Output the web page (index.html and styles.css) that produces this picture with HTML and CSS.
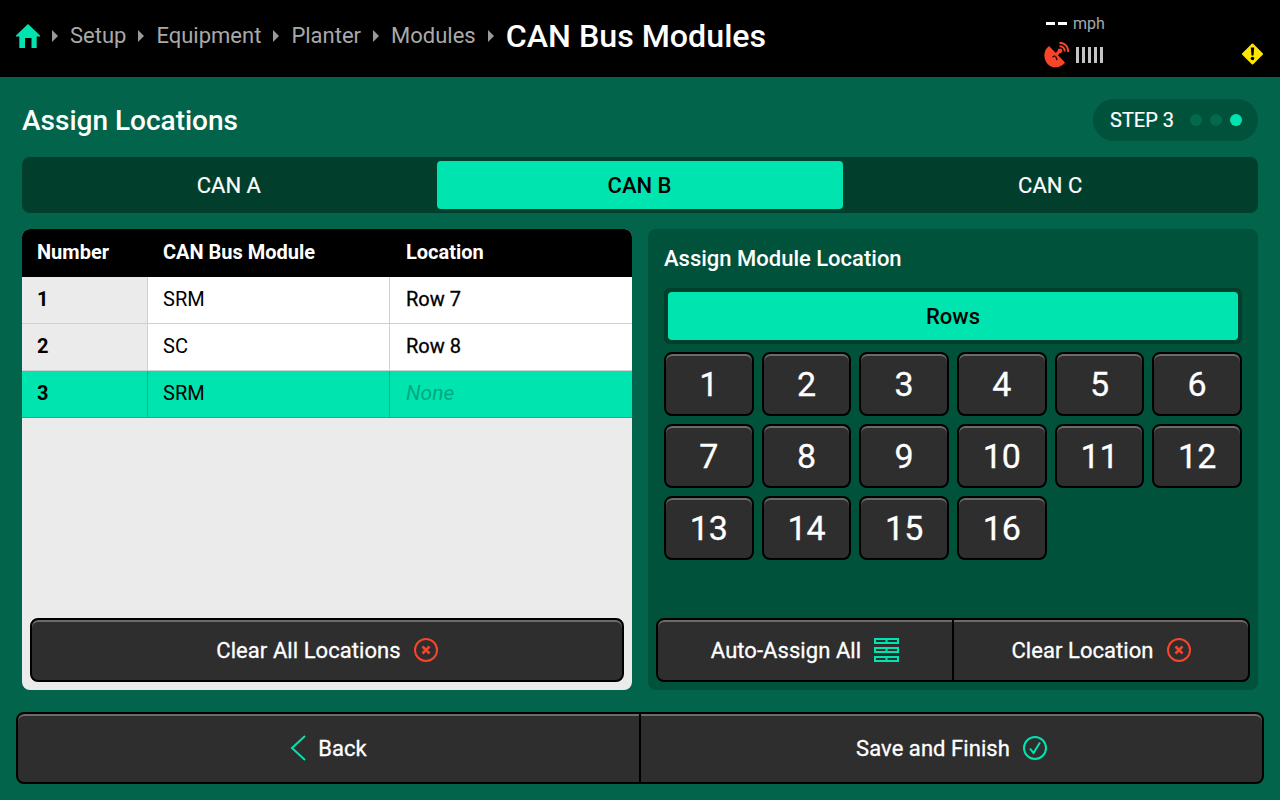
FILE: index.html
```html
<!DOCTYPE html>
<html lang="en">
<head>
<meta charset="utf-8">
<title>CAN Bus Modules</title>
<link rel="stylesheet" href="styles.css">
</head>
<body>
<header class="topbar">
  <nav class="crumbs">
    <svg class="home" width="24" height="24" viewBox="0 0 24 24"><path fill="#00e5b0" d="M12 0 24 11.500V12.500H20.700V24H15.500V14H9V24H3.300V12.500H0V11.500Z"/></svg>
    <i class="caret"></i><span>Setup</span>
    <i class="caret"></i><span>Equipment</span>
    <i class="caret"></i><span>Planter</span>
    <i class="caret"></i><span>Modules</span>
    <i class="caret"></i><strong>CAN Bus Modules</strong>
  </nav>
  <div class="status">
    <div class="speed"><i class="dash"></i><i class="dash"></i><span>mph</span></div>
    <div class="signal">
      <svg width="25" height="26" viewBox="0 0 25 26">
        <path fill="#f8452a" d="M5 4 21 20.500C18 25 11 26.800 6 24 0 20.500-1.500 11 3 6Z"/>
        <path fill="none" stroke="#000" stroke-width="1.300" d="M8.500 15 11.500 13.500 13 18"/>
        <path fill="#f8452a" d="M10 12.500 14.500 8.200 16.500 10.300 12.300 15Z"/>
        <circle cx="16" cy="8.800" r="2.400" fill="#f8452a"/>
        <path fill="none" stroke="#f8452a" stroke-width="2" d="M15.500 4.300C18.500 3.800 21 6.500 20.700 9.500M15.500 1C20.500.5 24.700 5 24 10"/>
      </svg>
      <div class="bars"><i></i><i></i><i></i><i></i><i></i></div>
    </div>
  </div>
  <svg class="warn" width="21" height="22" viewBox="0 0 21 22">
    <path fill="#ffe600" stroke="#ffe600" stroke-linejoin="round" stroke-width="2" d="M10.500 1.500 20 11 10.500 20.500 1 11Z"/>
    <path fill="#000" d="M8.800 4.500H12.200L11.500 12.500H9.500Z"/>
    <circle cx="10.500" cy="15.500" r="1.800" fill="#000"/>
  </svg>
</header>

<main class="content">
  <div class="title-row">
    <h1>Assign Locations</h1>
    <div class="step"><span>STEP 3</span><i class="dot"></i><i class="dot"></i><i class="dot on"></i></div>
  </div>

  <div class="tabs">
    <div class="tab">CAN A</div>
    <div class="tab active">CAN B</div>
    <div class="tab">CAN C</div>
  </div>

  <div class="panels">
    <section class="panel-left">
      <div class="table">
        <div class="row head"><div>Number</div><div>CAN Bus Module</div><div>Location</div></div>
        <div class="row"><div class="num">1</div><div>SRM</div><div class="loc">Row 7</div></div>
        <div class="row"><div class="num">2</div><div>SC</div><div class="loc">Row 8</div></div>
        <div class="row sel"><div class="num">3</div><div>SRM</div><div class="none">None</div></div>
      </div>
      <div class="btn-group left-action">
        <button class="btn">Clear All Locations
          <svg width="24" height="24" viewBox="0 0 24 24"><circle cx="12" cy="12" r="11" fill="none" stroke="#f8452a" stroke-width="2"/><path fill="none" stroke="#f8452a" stroke-width="2.500" d="M8.500 8.500 15.500 15.500M15.500 8.500 8.500 15.500"/></svg>
        </button>
      </div>
    </section>

    <section class="panel-right">
      <h2>Assign Module Location</h2>
      <div class="rows-wrap"><div class="rows-btn">Rows</div></div>
      <div class="grid">
        <button class="key">1</button><button class="key">2</button><button class="key">3</button><button class="key">4</button><button class="key">5</button><button class="key">6</button>
        <button class="key">7</button><button class="key">8</button><button class="key">9</button><button class="key">10</button><button class="key">11</button><button class="key">12</button>
        <button class="key">13</button><button class="key">14</button><button class="key">15</button><button class="key">16</button>
      </div>
      <div class="btn-group right-actions">
        <button class="btn">Auto-Assign All
          <svg width="25" height="24" viewBox="0 0 25 24"><g fill="none" stroke="#00e5b0" stroke-width="2"><rect x="1" y="1" width="23" height="4"/><rect x="1" y="10" width="23" height="4"/><rect x="1" y="19" width="23" height="4"/><path d="M12.500 1V5M12.500 10V14M12.500 19V23"/></g></svg>
        </button>
        <button class="btn">Clear Location
          <svg width="24" height="24" viewBox="0 0 24 24"><circle cx="12" cy="12" r="11" fill="none" stroke="#f8452a" stroke-width="2"/><path fill="none" stroke="#f8452a" stroke-width="2.500" d="M8.500 8.500 15.500 15.500M15.500 8.500 8.500 15.500"/></svg>
        </button>
      </div>
    </section>
  </div>

  <div class="btn-group footer">
    <button class="btn back">
      <svg width="16" height="26" viewBox="0 0 16 26"><path fill="none" stroke="#00e5b0" stroke-width="2" d="M15 1 2 13 15 25"/></svg>
      Back
    </button>
    <button class="btn">Save and Finish
      <svg width="24" height="24" viewBox="0 0 24 24"><circle cx="12" cy="12" r="11" fill="none" stroke="#00e5b0" stroke-width="2"/><path fill="none" stroke="#00e5b0" stroke-width="2" d="M7 12.500 10.500 17 17 6.500"/></svg>
    </button>
  </div>
</main>
</body>
</html>
```

FILE: styles.css
```css
* { box-sizing: border-box; }
html, body { margin: 0; height: 100%; }
body {
  width: 1280px;
  height: 800px;
  overflow: hidden;
  background: #02644a;
  font-family: Roboto, "Liberation Sans", sans-serif;
  color: #fff;
  display: flex;
  flex-direction: column;
}
.topbar {
  height: 77px;
  flex: none;
  background: #000;
  display: flex;
  align-items: center;
  padding: 0 18px 0 16px;
  position: relative;
}
.crumbs {
  display: flex;
  align-items: center;
  gap: 12px;
  font-size: 22px;
  color: #a9a9a9;
  width: 1028px;
  flex: none;
  height: 77px;
  padding-bottom: 6px;
}
.crumbs strong { font-size: 32.2px; font-weight: 500; color: #fff; }
.home { flex: none; margin-top: 1px; }
.caret {
  width: 0;
  height: 0;
  border-left: 6px solid #999;
  border-top: 6px solid transparent;
  border-bottom: 6px solid transparent;
}
.status { display: flex; flex-direction: column; gap: 8px; padding-top: 4px; }
.speed { display: flex; align-items: center; font-size: 16px; color: #a9a9a9; height: 20px; }
.dash { width: 9px; height: 3px; background: #fff; margin-right: 3px; }
.dash:first-child { margin-left: 2px; }
.speed span { margin-left: 3px; }
.signal { display: flex; align-items: center; gap: 7px; }
.bars { display: flex; gap: 3px; }
.bars i { width: 3px; height: 16px; background: #c4c4c4; }
.warn { position: absolute; left: 1242px; top: 43px; }

.content {
  flex: 1;
  padding: 0 16px 16px;
  display: flex;
  flex-direction: column;
}
.title-row {
  height: 80px;
  margin: 0 6px;
  display: flex;
  align-items: center;
  justify-content: space-between;
  padding-top: 6px;
}
h1 { margin: 0; font-size: 28px; font-weight: 500; }
.step {
  width: 165px;
  height: 42px;
  border-radius: 21px;
  background: #01523b;
  display: flex;
  align-items: center;
  gap: 8px;
  padding-left: 17px;
  font-size: 20px;
  -webkit-text-stroke: 0.2px currentColor;
}
.step span { margin-right: 8px; }
.dot { width: 12px; height: 12px; border-radius: 50%; background: #03694d; }
.dot.on { background: #00e5b0; }

.tabs {
  height: 56px;
  margin: 0 6px;
  padding: 4px;
  border-radius: 8px;
  background: #013f2c;
  display: grid;
  grid-template-columns: repeat(3, 1fr);
  gap: 4px;
}
.tab {
  display: flex;
  align-items: center;
  justify-content: center;
  font-size: 22px;
  -webkit-text-stroke: 0.2px currentColor;
  border-radius: 4px;
  padding: 0 1px 0 0;
}
.tab.active { background: #00e5b0; color: #000; font-weight: 500; -webkit-text-stroke: 0; }

.panels {
  height: 461px;
  margin: 16px 6px 22px;
  display: grid;
  grid-template-columns: 610px 610px;
  gap: 16px;
}
.panel-left {
  background: #ebebeb;
  border-radius: 8px;
  display: flex;
  flex-direction: column;
  overflow: hidden;
  color: #000;
}
.table { flex: 1; }
.row {
  display: grid;
  grid-template-columns: 126px 242px 242px;
  height: 47px;
  font-size: 20px;
  border-bottom: 1px solid #d0d0d0;
  background: #fff;
}
.row > div {
  display: flex;
  align-items: center;
  padding: 0 0 2px 15px;
  border-right: 1px solid #d0d0d0;
}
.row > div:last-child { border-right: 0; padding-left: 16px; }
.row .num { background: #ebebeb; font-weight: 700; }
.row .loc { -webkit-text-stroke: 0.3px currentColor; }
.row.head {
  height: 48px;
  background: #000;
  color: #fff;
  font-weight: 700;
  border: 0;
}
.row.head > div { border: 0; }
.row.sel { background: #00e5b0; border-bottom-color: #00b98e; }
.row.sel > div { border-right-color: #00b98e; }
.row.sel .num { background: #00e5b0; }
.row .none { color: #00a880; font-style: italic; font-size: 21px; }

.panel-right {
  background: #01523b;
  border-radius: 8px;
  padding: 0 8px 8px;
  display: flex;
  flex-direction: column;
}
h2 { margin: 0; height: 59px; line-height: 59px; padding-left: 8px; font-size: 22px; font-weight: 500; }
.rows-wrap {
  margin: 0 8px 8px;
  height: 56px;
  padding: 4px;
  background: #013f2c;
  border-radius: 6px;
}
.rows-btn {
  height: 48px;
  background: #00e5b0;
  border-radius: 4px;
  color: #000;
  font-size: 22px;
  font-weight: 500;
  display: flex;
  align-items: center;
  justify-content: center;
}
.grid {
  flex: 1;
  margin: 0 8px;
  display: grid;
  grid-template-columns: repeat(6, 1fr);
  grid-auto-rows: 64px;
  gap: 8px;
}
.key, .btn {
  background: #2e2e2e;
  color: #fff;
  font-family: inherit;
  border: 2px solid #000;
  box-shadow: inset 0 2px 0 #6b6b6b;
  padding: 0;
  -webkit-text-stroke: 0.3px currentColor;
}
.key { border-radius: 8px; font-size: 34px; }

.btn-group { display: flex; height: 64px; flex: none; }
.btn {
  flex: 1;
  font-size: 22px;
  letter-spacing: 0.06px;
  display: flex;
  align-items: center;
  justify-content: center;
  gap: 13px;
  border-radius: 0;
}
.btn:first-child { border-radius: 8px 0 0 8px; }
.btn:last-child { border-radius: 0 8px 8px 0; }
.btn:only-child { border-radius: 8px; }
.btn + .btn { border-left: 0; }
.btn.back { gap: 12px; }
.left-action { margin: 0 8px 8px; }
.footer { height: 72px; }
```
